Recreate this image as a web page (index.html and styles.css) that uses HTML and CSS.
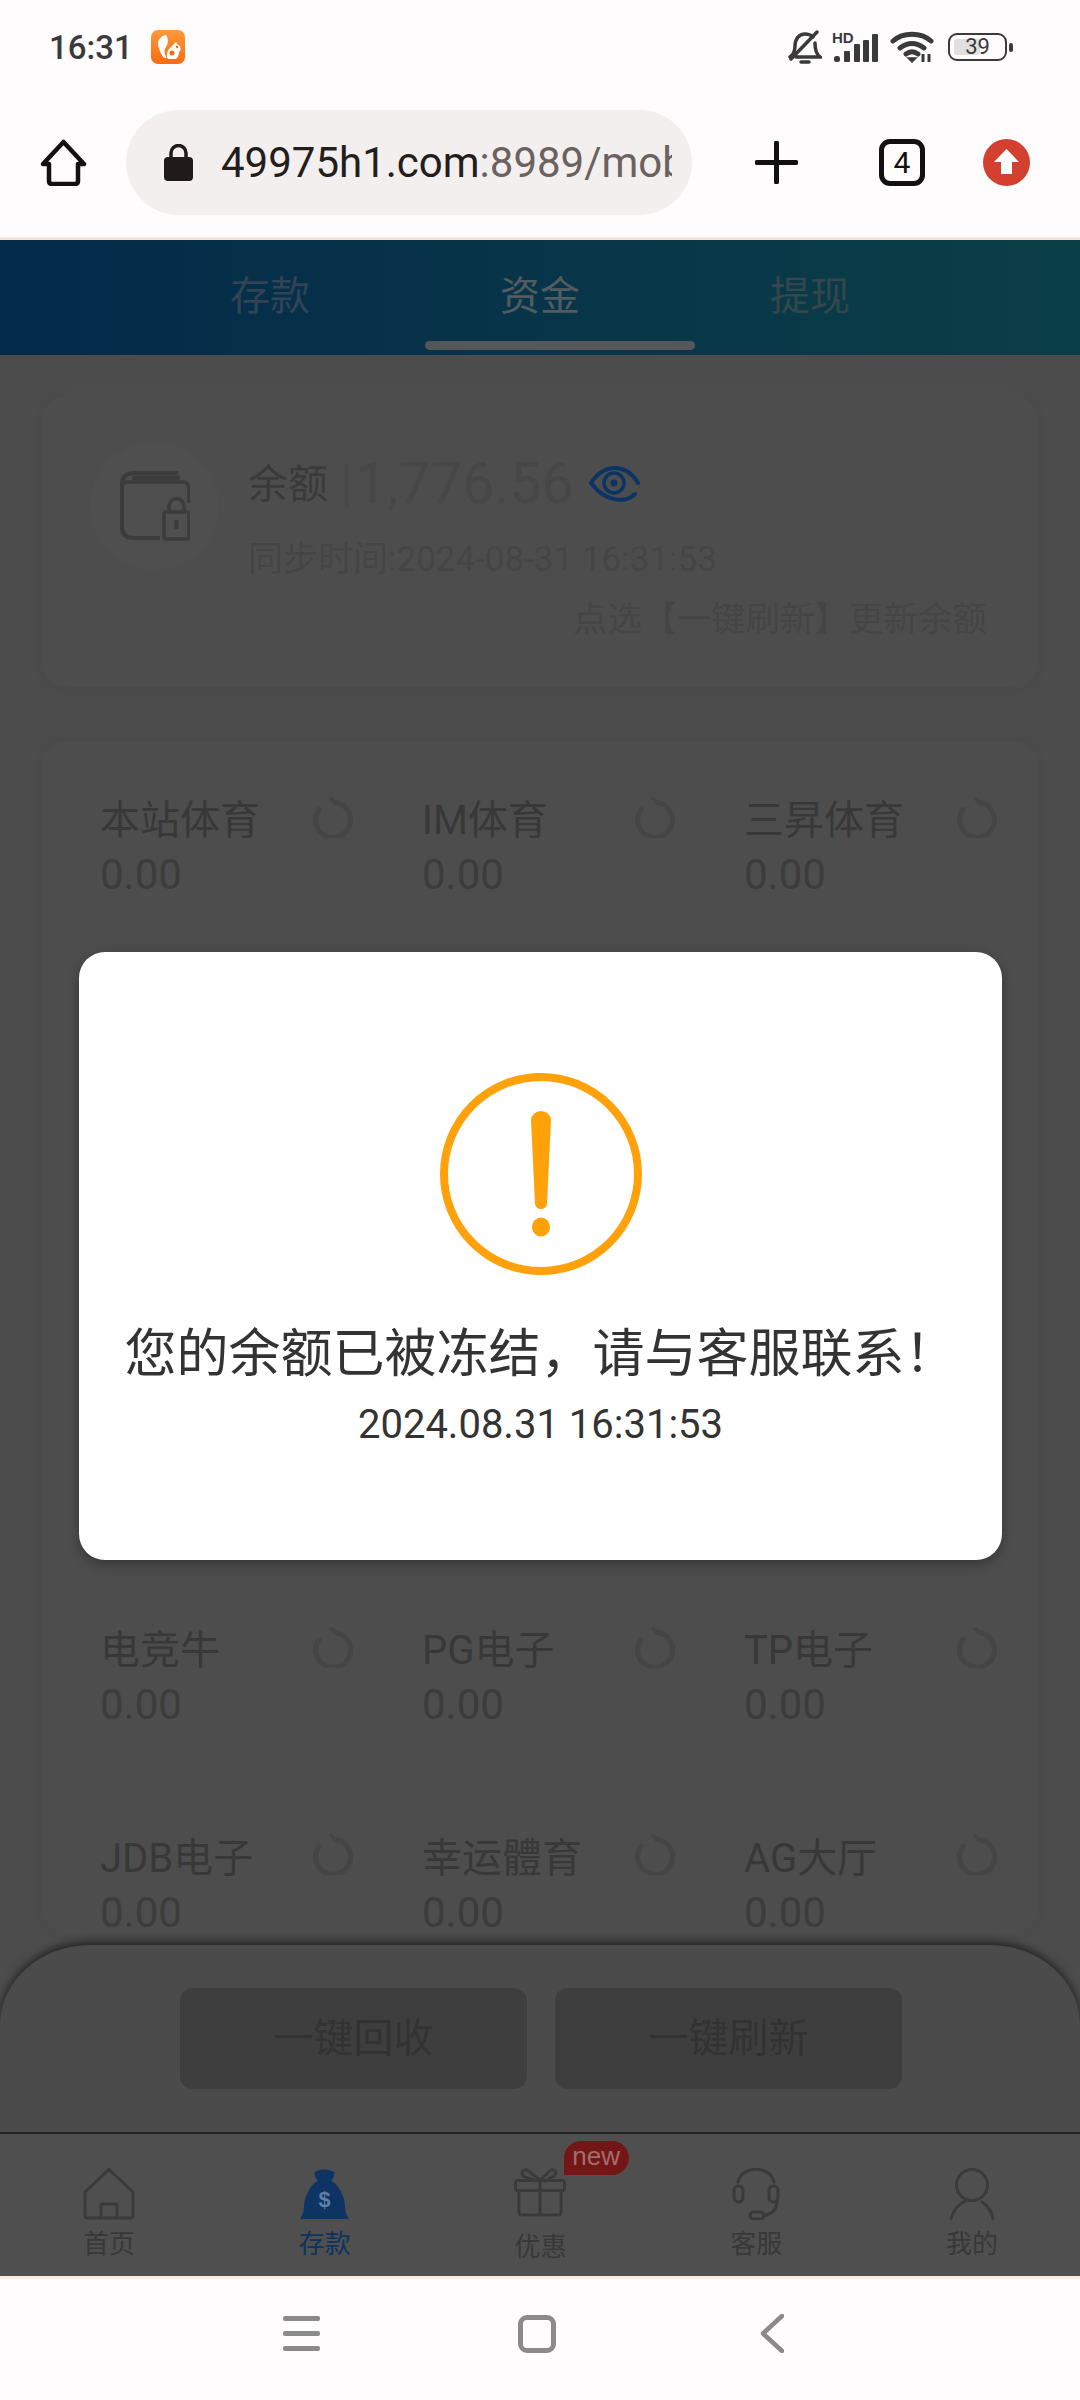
FILE: index.html
```html
<!DOCTYPE html>
<html lang="zh">

<head>
    <meta charset="UTF-8">
    <title>资金</title>
    <link rel="stylesheet" href="styles.css">
</head>

<body>
    <svg class="defs" width="0" height="0">
        <symbol id="refresh" viewBox="0 0 40 41">
            <path d="M22 5.500A17.500 17.500 0 1 1 6 12.500" fill="none" stroke="currentColor" stroke-width="5" stroke-linecap="round" />
            <path d="M18 1.500l5 4.500" fill="none" stroke="currentColor" stroke-width="3.500" stroke-linecap="round" />
        </symbol>
    </svg>

    <div class="page">
        <!-- 状态栏 -->
        <div class="statusbar">
            <div class="status-left">
                <span class="time">16:31</span>
                <svg class="uc-logo" viewBox="0 0 34 34">
                    <defs>
                        <linearGradient id="ucBg" x1="0" y1="0" x2="0" y2="1">
                            <stop offset="0" stop-color="#ff9a3c" />
                            <stop offset="1" stop-color="#fb6a10" />
                        </linearGradient>
                    </defs>
                    <rect width="34" height="34" rx="7" fill="url(#ucBg)" />
                    <path d="M15 5C9 6 5 12 8 18c1 3 2 7 5 10h3c-3-4-3-8-1-11 2-3 3-8 0-12z" fill="#fff" />
                    <path d="M17 29c-2-4-1-8 2-11l6-6 2 3 2 1c1 3 1 4-1 6 0 3-1 5-3 7z" fill="#fff" />
                    <circle cx="21" cy="23" r="2.500" fill="#fb6a10" />
                    <circle cx="26" cy="17" r="1.200" fill="#fb6a10" />
                </svg>
            </div>
            <div class="status-right">
                <svg class="ic-bell" viewBox="0 0 34 34" fill="none" stroke="#3a3a3a" stroke-width="3.500" stroke-linecap="round">
                    <path d="M2 27c4-3 5-6 5-11 0-7 4-12 10-12 3 0 6 1 8 3" />
                    <path d="M27 13c0 6 1 11 5 14H8" />
                    <path d="M29 2L3 29" />
                    <path d="M13 32h8" />
                </svg>
                <div class="signal">
                    <span class="hd">HD</span>
                    <svg viewBox="0 0 44 28" fill="#3a3a3a">
                        <rect x="0" y="22" width="6" height="6" rx="2.500" />
                        <rect x="10" y="17" width="6" height="11" rx="1" />
                        <rect x="20" y="10" width="6" height="18" rx="1" />
                        <rect x="29" y="6" width="6" height="22" rx="1" />
                        <rect x="38" y="0" width="6" height="28" rx="1" />
                    </svg>
                </div>
                <svg class="ic-wifi" viewBox="0 0 44 32" fill="none" stroke="#3a3a3a" stroke-width="5" stroke-linecap="round">
                    <path d="M3 10C13 1 31 1 41 10" />
                    <path d="M10 17c8-6 16-6 24 0" />
                    <path d="M16 23c4-3 8-3 12 0" />
                    <path d="M18 27l4 4 4-4z" fill="#3a3a3a" stroke-width="1.500" />
                    <path d="M33 23v8M39 23v8" stroke-width="3" stroke-linecap="butt" />
                </svg>
                <div class="battery">
                    <div class="battery-fill"></div>
                    <span class="battery-num">39</span>
                </div>
                <div class="battery-nub"></div>
            </div>
        </div>

        <!-- 浏览器地址栏 -->
        <div class="toolbar">
            <svg class="ic-home" viewBox="0 0 47 47">
                <path d="M23.500 3L44 25h-6v17q0 3-3 3H12q-3 0-3-3V25H3z" fill="none" stroke="#111" stroke-width="4.500" stroke-linejoin="round" />
            </svg>
            <div class="urlbar">
                <svg class="ic-lock" viewBox="0 0 29 37">
                    <path d="M7 15V9a7.500 7.500 0 0 1 15 0v6" fill="none" stroke="#201a18" stroke-width="3.500" />
                    <rect y="13" width="29" height="24" rx="4" fill="#201a18" />
                </svg>
                <span class="url"><b>49975h1.com</b>:8989/mobile</span>
            </div>
            <svg class="ic-plus" viewBox="0 0 43 43">
                <path d="M21.500 2v39M2 21.500h39" stroke="#111" stroke-width="5" stroke-linecap="round" />
            </svg>
            <div class="tabcount">4</div>
            <svg class="ic-upload" viewBox="0 0 47 47">
                <circle cx="23.500" cy="23.500" r="23.500" fill="#d44030" />
                <path d="M23.500 10L36 23h-7v12H18V23h-7z" fill="#fff" />
            </svg>
        </div>

        <!-- 顶部切换 -->
        <div class="tabs">
            <a class="tab tab-a">存款</a>
            <a class="tab tab-b">资金</a>
            <a class="tab tab-c">提现</a>
            <div class="tab-line"></div>
        </div>

        <div class="main">
            <!-- 余额 -->
            <div class="card balance-card">
                <div class="balance-top">
                    <div class="wallet">
                        <svg viewBox="0 0 70 70" fill="none" stroke="#3c3c3c" stroke-width="4" stroke-linejoin="round">
                            <path d="M40 67H14Q2 67 2 56V14Q2 2 14 2H58" />
                            <path d="M2 16Q2 11 8 11H62Q69 11 69 18V32" stroke-width="3.500" />
                            <path d="M12 7H60" stroke-width="5" />
                            <rect x="44" y="41" width="25" height="27" rx="2" stroke-width="3.500" />
                            <path d="M49 41v-6a7.500 7.500 0 0 1 15 0v6" stroke-width="3.500" />
                            <path d="M56.500 49v9" stroke-width="4" />
                        </svg>
                    </div>
                    <div class="balance-info">
                        <div class="balance-row">
                            <span class="balance-label">余额</span>
                            <span class="balance-bar"></span>
                            <span class="balance-num">1,776.56</span>
                            <svg class="ic-eye" viewBox="0 0 53 40" fill="none" stroke="#0c3366" stroke-width="4" stroke-linecap="round">
                                <path d="M47 31C38 40 18 40 3 20 16 0 38 0 50 20" />
                                <circle cx="26" cy="20" r="10" stroke-width="3.500" />
                                <circle cx="26" cy="20" r="3.500" fill="#0c3366" stroke="none" />
                            </svg>
                        </div>
                        <div class="sync-time">同步时间:2024-08-31 16:31:53</div>
                    </div>
                </div>
                <div class="hint">点选【一键刷新】更新余额</div>
            </div>

            <!-- 各平台余额 -->
            <div class="card platform-card">
                <div class="platform-grid">
                    <div class="platform">
                        <div class="platform-head"><span>本站体育</span><svg class="ic-refresh"><use href="#refresh" /></svg></div>
                        <div class="platform-num">0.00</div>
                    </div>
                    <div class="platform">
                        <div class="platform-head"><span>IM体育</span><svg class="ic-refresh"><use href="#refresh" /></svg></div>
                        <div class="platform-num">0.00</div>
                    </div>
                    <div class="platform">
                        <div class="platform-head"><span>三昇体育</span><svg class="ic-refresh"><use href="#refresh" /></svg></div>
                        <div class="platform-num">0.00</div>
                    </div>

                    <div class="platform-covered"></div>

                    <div class="platform">
                        <div class="platform-head"><span>电竞牛</span><svg class="ic-refresh"><use href="#refresh" /></svg></div>
                        <div class="platform-num">0.00</div>
                    </div>
                    <div class="platform">
                        <div class="platform-head"><span>PG电子</span><svg class="ic-refresh"><use href="#refresh" /></svg></div>
                        <div class="platform-num">0.00</div>
                    </div>
                    <div class="platform">
                        <div class="platform-head"><span>TP电子</span><svg class="ic-refresh"><use href="#refresh" /></svg></div>
                        <div class="platform-num">0.00</div>
                    </div>
                    <div class="platform">
                        <div class="platform-head"><span>JDB电子</span><svg class="ic-refresh"><use href="#refresh" /></svg></div>
                        <div class="platform-num">0.00</div>
                    </div>
                    <div class="platform">
                        <div class="platform-head"><span>幸运體育</span><svg class="ic-refresh"><use href="#refresh" /></svg></div>
                        <div class="platform-num">0.00</div>
                    </div>
                    <div class="platform">
                        <div class="platform-head"><span>AG大厅</span><svg class="ic-refresh"><use href="#refresh" /></svg></div>
                        <div class="platform-num">0.00</div>
                    </div>
                </div>
            </div>
        </div>

        <!-- 一键操作 -->
        <div class="actions">
            <a class="action-btn">一键回收</a>
            <a class="action-btn">一键刷新</a>
        </div>

        <!-- 底部导航 -->
        <div class="nav">
            <a class="nav-item">
                <svg class="nav-icon" viewBox="0 0 52 52" fill="none" stroke="#3a3a3a" stroke-width="3" stroke-linejoin="round">
                    <path d="M26 1.500L50 24V47q0 3-3 3H5q-3 0-3-3V24z" />
                    <path d="M18 50V37q0-1 1-1H33q1 0 1 1V50" />
                </svg>
                <span>首页</span>
            </a>
            <a class="nav-item active">
                <svg class="nav-icon" viewBox="0 0 52 53">
                    <path d="M16 4q10-5 20 0 1 4-3 9 8 5 12 16 2 6 2 11 0 6 4 12H1q4-6 4-12 0-5 2-11 4-11 12-16-4-5-3-9z" fill="#0e3464" />
                    <text x="26" y="40" class="bag-sign">$</text>
                </svg>
                <span>存款</span>
            </a>
            <a class="nav-item promo">
                <svg class="nav-icon" viewBox="0 0 52 52" fill="none" stroke="#3a3a3a" stroke-width="3" stroke-linejoin="round">
                    <path d="M26 15L13 5q-4-1-5 3 0 3 3 4l11 4M26 15L37 5q4-1 5 3-1 3-4 4l-7 4" stroke-linecap="round" />
                    <rect x="1.500" y="15.500" width="49" height="10" rx="2" />
                    <path d="M5 26V47q0 3 3 3H44q3 0 3-3V26M26 16V50" />
                </svg>
                <span>优惠</span>
                <em class="badge">new</em>
            </a>
            <a class="nav-item">
                <svg class="nav-icon" viewBox="0 0 48 52" fill="none" stroke="#3a3a3a" stroke-width="3" stroke-linecap="round">
                    <path d="M6 14C9 -3 39 -3 42 14" />
                    <rect x="2" y="18" width="9" height="16" rx="4.500" />
                    <rect x="37" y="18" width="9" height="16" rx="4.500" />
                    <path d="M45 34c0 8-6 12-13 14" />
                    <rect x="18" y="44" width="14" height="7" rx="3.500" />
                </svg>
                <span>客服</span>
            </a>
            <a class="nav-item">
                <svg class="nav-icon" viewBox="0 0 46 52" fill="none" stroke="#3a3a3a" stroke-width="3" stroke-linecap="round">
                    <circle cx="23" cy="17" r="15.500" />
                    <path d="M2 51C4 42 9 36 18 32" />
                    <path d="M33 34C39 38 43 44 44 51" />
                </svg>
                <span>我的</span>
            </a>
        </div>

        <!-- 系统导航 -->
        <div class="sysnav">
            <div class="sys-menu"><i></i><i></i><i></i></div>
            <div class="sys-home"></div>
            <svg class="sys-back" viewBox="0 0 24 39">
                <path d="M22 2L3 19.500 22 37" fill="none" stroke="#8a8a8a" stroke-width="4.500" stroke-linecap="round" stroke-linejoin="round" />
            </svg>
        </div>

        <!-- 冻结提示弹窗 -->
        <div class="dialog">
            <svg class="dialog-icon" viewBox="0 0 202 202">
                <circle cx="101" cy="101" r="97" fill="none" stroke="#ffa10a" stroke-width="8" />
                <path d="M91 47a10 9 0 0 1 20 0l-4 84q-1 5-6 5t-6-5z" fill="#ffa10a" />
                <ellipse cx="101" cy="154" rx="9" ry="9.500" fill="#ffa10a" />
            </svg>
            <div class="dialog-title">您的余额已被冻结，请与客服联系！</div>
            <div class="dialog-date">2024.08.31 16:31:53</div>
        </div>
    </div>
</body>

</html>
```

FILE: styles.css
```css
/*初始化  reset*/
* {
    box-sizing: border-box;
}

body,
div,
span {
    margin: 0;
    padding: 0;
}

body {
    background: #4c4c4c;
    font-family: Roboto, "Noto Sans CJK SC", sans-serif;
    color: #3a3a3a;
}

a {
    text-decoration: none;
    cursor: pointer;
}

em {
    font-style: normal;
}

svg {
    display: block;
    flex: none;
}

.defs {
    position: absolute;
}

.page {
    width: 1080px;
    height: 2400px;
    position: relative;
    display: flex;
    flex-direction: column;
    overflow: hidden;
}

/*状态栏*/
.statusbar {
    height: 90px;
    padding: 4px 67px 0 49px;
    background: #fffcfe;
    display: flex;
    align-items: center;
    justify-content: space-between;
}

.status-left {
    display: flex;
    align-items: center;
    gap: 18px;
}

.time {
    font-size: 33px;
    font-weight: 500;
    color: #3a3a3a;
}

.uc-logo {
    width: 34px;
    height: 34px;
}

.status-right {
    display: flex;
    align-items: center;
}

.ic-bell {
    width: 34px;
    height: 34px;
}

.signal {
    width: 44px;
    height: 30px;
    margin-left: 12px;
    position: relative;
}

.signal svg {
    width: 44px;
    height: 28px;
    position: absolute;
    bottom: 0;
}

.hd {
    position: absolute;
    top: -1px;
    left: -2px;
    font: bold 15px/14px "Liberation Sans", sans-serif;
    color: #3a3a3a;
}

.ic-wifi {
    width: 44px;
    height: 32px;
    margin-left: 12px;
}

.battery {
    width: 59px;
    height: 28px;
    margin-left: 14px;
    border: 2.5px solid #3a3a3a;
    border-radius: 9px;
    padding: 4px;
    position: relative;
}

.battery-fill {
    width: 26px;
    height: 100%;
    background: #e0e0e0;
    border-radius: 3px;
}

.battery-num {
    position: absolute;
    left: 0;
    right: 0;
    top: 0;
    bottom: 0;
    text-align: center;
    font-size: 22px;
    line-height: 23px;
    color: #3a3a3a;
}

.battery-nub {
    width: 4px;
    height: 9px;
    margin-left: 2px;
    border-radius: 2px;
    background: #3a3a3a;
}

/*地址栏*/
.toolbar {
    height: 150px;
    padding: 0 0 3px 40px;
    background: #fffcfe;
    border-bottom: 3px solid #f3e4dc;
    display: flex;
    align-items: center;
}

.ic-home {
    width: 47px;
    height: 47px;
}

.urlbar {
    width: 566px;
    height: 105px;
    margin-left: 39px;
    padding: 0 20px 0 38px;
    border-radius: 53px;
    background: #f4efef;
    display: flex;
    align-items: center;
    gap: 28px;
}

.ic-lock {
    width: 29px;
    height: 37px;
}

.url {
    flex: 1;
    overflow: hidden;
    white-space: nowrap;
    font-size: 42px;
    color: #6b6260;
}

.url b {
    font-weight: 400;
    color: #231e1c;
}

.ic-plus {
    width: 43px;
    height: 43px;
    margin-left: 63px;
}

.tabcount {
    width: 46px;
    height: 47px;
    margin-left: 81px;
    border: 5px solid #111;
    border-radius: 11px;
    text-align: center;
    font-size: 30px;
    line-height: 37px;
    color: #111;
}

.ic-upload {
    width: 47px;
    height: 47px;
    margin-left: 58px;
}

/*顶部切换*/
.tabs {
    height: 115px;
    padding: 0 135px 10px;
    background: linear-gradient(90deg, #042a4a, #0b3f47);
    display: flex;
    align-items: center;
    position: relative;
}

.tab {
    width: 270px;
    text-align: center;
    font-size: 40px;
}

.tab-a {
    color: #314355;
}

.tab-b {
    color: #525c60;
}

.tab-c {
    color: #33474c;
}

.tab-line {
    position: absolute;
    left: 425px;
    bottom: 5px;
    width: 270px;
    height: 9px;
    border-radius: 5px;
    background: #55575a;
}

/*内容*/
.main {
    height: 1590px;
    padding: 41px 42px 0;
    background: #4c4c4c;
    overflow: hidden;
}

.card {
    background: #4d4d4d;
    border-radius: 24px;
    box-shadow: 0 0 6px rgba(72, 72, 72, 0.4);
}

.balance-card {
    height: 291px;
    padding: 46px 51px 0 48px;
}

.balance-top {
    display: flex;
    gap: 29px;
}

.wallet {
    width: 129px;
    height: 128px;
    border-radius: 50%;
    background: #4f4f4f;
    display: flex;
    align-items: center;
    justify-content: center;
}

.wallet svg {
    width: 70px;
    height: 70px;
}

.balance-row {
    height: 82px;
    display: flex;
    align-items: center;
}

.balance-label {
    margin-bottom: 5px;
    font-size: 40px;
    color: #3a3a3a;
}

.balance-bar {
    width: 4px;
    height: 44px;
    margin: 4px 6px 0 17px;
    background: #494949;
}

.balance-num {
    font-size: 57px;
    color: #474747;
}

.ic-eye {
    width: 53px;
    height: 40px;
    margin-left: 15px;
}

.sync-time {
    height: 72px;
    line-height: 72px;
    font-size: 35px;
    color: #454545;
}

.hint {
    height: 46px;
    line-height: 46px;
    text-align: right;
    font-size: 34.5px;
    color: #454545;
}

.platform-card {
    height: 1192px;
    margin-top: 54px;
    padding: 49px 0 0 58px;
    overflow: hidden;
}

.platform-grid {
    display: grid;
    grid-template-columns: repeat(3, 322px);
    grid-auto-rows: 110px;
    row-gap: 97.5px;
}

.platform {
    padding-right: 69px;
}

/*三行被弹窗挡住*/
.platform-covered {
    grid-column: 1 / -1;
    grid-row: span 3;
}

.platform-head {
    height: 54px;
    margin-bottom: 5px;
    display: flex;
    align-items: center;
    justify-content: space-between;
    font-size: 40px;
    color: #383838;
}

.ic-refresh {
    width: 40px;
    height: 41px;
    color: #454545;
}

.platform-num {
    height: 52px;
    line-height: 52px;
    font-size: 42px;
    color: #3c3c3c;
}

/*一键操作*/
.actions {
    height: 187px;
    padding: 43px 0 0 180px;
    background: #4b4b4b;
    border-radius: 90px 90px 0 0 / 80px 80px 0 0;
    box-shadow: 0 -3px 9px rgba(0, 0, 0, 0.55);
    display: flex;
    gap: 28px;
    position: relative;
}

.action-btn {
    width: 347px;
    height: 101px;
    line-height: 101px;
    border-radius: 13px;
    background: #3e3e3e;
    text-align: center;
    font-size: 40px;
    color: #323232;
}

/*底部导航*/
.nav {
    height: 144px;
    padding-left: 1px;
    border-top: 2px solid #262626;
    background: #4f4f4f;
    display: flex;
    position: relative;
}

.nav-item {
    width: 216px;
    padding-top: 34px;
    display: flex;
    flex-direction: column;
    align-items: center;
    position: relative;
    font-size: 26px;
    line-height: 28px;
    color: #383838;
}

.nav-icon {
    height: 52px;
    margin-bottom: 10px;
}

.nav-item.active {
    color: #0c3360;
}

.bag-sign {
    font: bold 22px "Liberation Sans", sans-serif;
    text-anchor: middle;
    fill: #5f80a5;
}

.promo .nav-icon {
    margin-top: -3px;
    margin-bottom: 16px;
}

.badge {
    position: absolute;
    left: 131px;
    top: 7px;
    width: 65px;
    height: 34px;
    border-radius: 17px 17px 17px 0;
    background: #751616;
    text-align: center;
    font: 26px/31px "Liberation Sans", sans-serif;
    color: #a26d6d;
}

/*系统导航*/
.sysnav {
    height: 124px;
    padding: 0 0 12px 283px;
    background: #fffcfe;
    border-top: 3px solid #f7e8e0;
    display: flex;
    align-items: center;
}

.sys-menu {
    width: 37px;
    display: flex;
    flex-direction: column;
    gap: 10px;
}

.sys-menu i {
    height: 5px;
    border-radius: 2px;
    background: #8a8a8a;
}

.sys-home {
    width: 38px;
    height: 38px;
    margin-left: 198px;
    border: 5px solid #8a8a8a;
    border-radius: 9px;
}

.sys-back {
    width: 24px;
    height: 39px;
    margin-left: 204px;
}

/*弹窗*/
.dialog {
    position: absolute;
    left: 79px;
    top: 952px;
    width: 923px;
    height: 608px;
    padding-top: 121px;
    border-radius: 26px;
    background: #fff;
    box-shadow: 0 4px 12px rgba(0, 0, 0, 0.3);
    display: flex;
    flex-direction: column;
    align-items: center;
}

.dialog-icon {
    width: 202px;
    height: 202px;
}

.dialog-title {
    margin-top: 47px;
    line-height: 66px;
    font-size: 52px;
    color: #333;
    white-space: nowrap;
}

.dialog-date {
    margin-top: 12px;
    line-height: 50px;
    font-size: 40px;
    color: #333;
}
```
